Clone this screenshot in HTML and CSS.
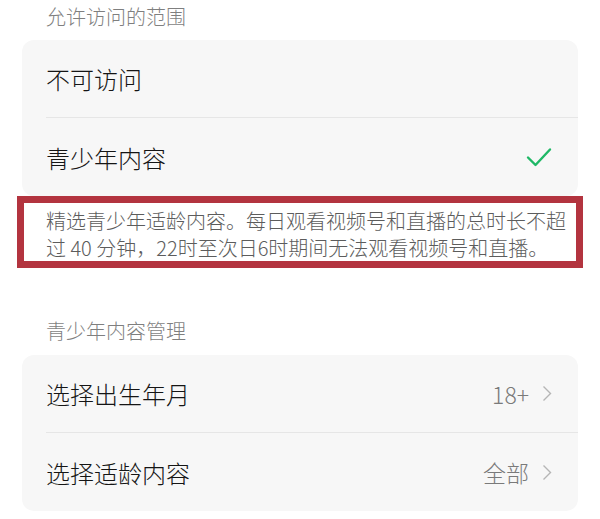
FILE: index.html
```html
<!DOCTYPE html>
<html>
<head>
    <meta charset="utf-8">
    <title>青少年模式</title>
    <link rel="stylesheet" href="styles.css">
</head>
<body>
    <div class="section-title">允许访问的范围</div>
    <div class="card">
        <div class="row">
            <span class="label">不可访问</span>
        </div>
        <div class="row">
            <span class="label">青少年内容</span>
            <svg class="check" width="26" height="20" viewBox="0 0 26 20">
                <path d="M2 10.5 L9.5 18 L24 2.5" fill="none" stroke="#1fb866" stroke-width="2.4" stroke-linecap="round" stroke-linejoin="round"/>
            </svg>
        </div>
    </div>

    <div class="description">
        精选青少年适龄内容。每日观看视频号和直播的总时长不超过 40 分钟，22时至次日6时期间无法观看视频号和直播。
    </div>

    <div class="section-title second">青少年内容管理</div>
    <div class="card">
        <div class="row">
            <span class="label">选择出生年月</span>
            <span class="value">18+</span>
            <svg class="chevron" width="10" height="17" viewBox="0 0 10 17">
                <path d="M1.5 1.5 L8.5 8.5 L1.5 15.5" fill="none" stroke="#b5b5b5" stroke-width="1.4"/>
            </svg>
        </div>
        <div class="row">
            <span class="label">选择适龄内容</span>
            <span class="value">全部</span>
            <svg class="chevron" width="10" height="17" viewBox="0 0 10 17">
                <path d="M1.5 1.5 L8.5 8.5 L1.5 15.5" fill="none" stroke="#b5b5b5" stroke-width="1.4"/>
            </svg>
        </div>
    </div>
</body>
</html>
```

FILE: styles.css
```css
body {
    margin: 0;
    padding: 0;
    background: #ffffff;
    font-family: "Noto Sans CJK SC", "Noto Sans", sans-serif;
    font-weight: 300;
    color: #151515;
}

.section-title {
    padding-left: 46px;
    font-size: 20px;
    line-height: 33px;
    color: #7f7f7f;
    margin-bottom: 7px;
}

.section-title.second {
    margin-top: 46px;
    margin-bottom: 8px;
}

.card {
    margin: 0 22px;
    background: #f7f7f7;
    border-radius: 12px;
    padding-left: 24px;
}

.row {
    display: flex;
    align-items: center;
    height: 77px;
    padding-right: 26px;
    border-bottom: 1px solid #e6e6e6;
}

.row:last-child {
    height: 78px;
    border-bottom: none;
}

.label {
    flex: 1;
    font-size: 24px;
}

.check {
    display: block;
}

.value {
    font-size: 23px;
    color: #7a7a7a;
    margin-right: 13px;
}

.chevron {
    display: block;
}

.description {
    margin: 0 17px;
    border: 7px solid #b3343f;
    background: #ffffff;
    padding: 4px 4px 0 22px;
    font-size: 20px;
    line-height: 27px;
    color: #5c5c5c;
}
```
